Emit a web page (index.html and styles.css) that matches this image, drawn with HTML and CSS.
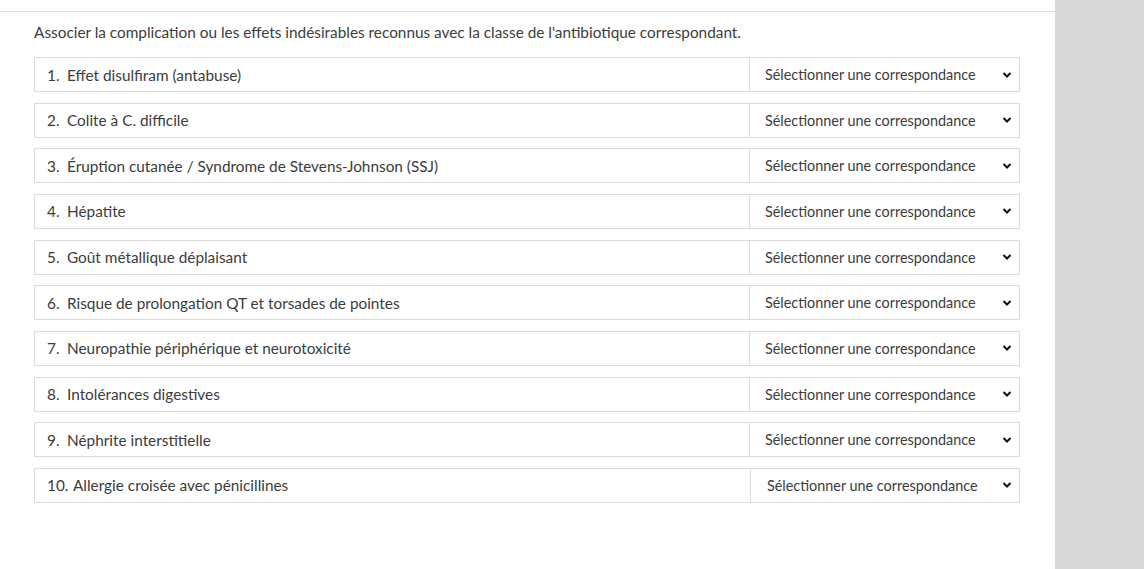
FILE: index.html
```html
<!DOCTYPE html>
<html lang="fr">
<head>
<meta charset="utf-8">
<title>Correspondance</title>
<link rel="stylesheet" href="styles.css">
</head>
<body>
<div class="page">
  <main class="content">
    <p class="prompt">Associer la complication ou les effets indésirables reconnus avec la classe de l'antibiotique correspondant.</p>
    <ol class="rows">
      <li class="row"><div class="label"><span class="num">1.</span><span>Effet disulfiram (antabuse)</span></div><div class="select"><span>Sélectionner une correspondance</span><svg class="chev" viewBox="0 0 10 8" width="10" height="8"><path d="M1.5 2 L5 5.5 L8.5 2" fill="none" stroke="#111" stroke-width="2"/></svg></div></li>
      <li class="row"><div class="label"><span class="num">2.</span><span>Colite à C. difficile</span></div><div class="select"><span>Sélectionner une correspondance</span><svg class="chev" viewBox="0 0 10 8" width="10" height="8"><path d="M1.5 2 L5 5.5 L8.5 2" fill="none" stroke="#111" stroke-width="2"/></svg></div></li>
      <li class="row"><div class="label"><span class="num">3.</span><span>Éruption cutanée / Syndrome de Stevens-Johnson (SSJ)</span></div><div class="select"><span>Sélectionner une correspondance</span><svg class="chev" viewBox="0 0 10 8" width="10" height="8"><path d="M1.5 2 L5 5.5 L8.5 2" fill="none" stroke="#111" stroke-width="2"/></svg></div></li>
      <li class="row"><div class="label"><span class="num">4.</span><span>Hépatite</span></div><div class="select"><span>Sélectionner une correspondance</span><svg class="chev" viewBox="0 0 10 8" width="10" height="8"><path d="M1.5 2 L5 5.5 L8.5 2" fill="none" stroke="#111" stroke-width="2"/></svg></div></li>
      <li class="row"><div class="label"><span class="num">5.</span><span>Goût métallique déplaisant</span></div><div class="select"><span>Sélectionner une correspondance</span><svg class="chev" viewBox="0 0 10 8" width="10" height="8"><path d="M1.5 2 L5 5.5 L8.5 2" fill="none" stroke="#111" stroke-width="2"/></svg></div></li>
      <li class="row"><div class="label"><span class="num">6.</span><span>Risque de prolongation QT et torsades de pointes</span></div><div class="select"><span>Sélectionner une correspondance</span><svg class="chev" viewBox="0 0 10 8" width="10" height="8"><path d="M1.5 2 L5 5.5 L8.5 2" fill="none" stroke="#111" stroke-width="2"/></svg></div></li>
      <li class="row"><div class="label"><span class="num">7.</span><span>Neuropathie périphérique et neurotoxicité</span></div><div class="select"><span>Sélectionner une correspondance</span><svg class="chev" viewBox="0 0 10 8" width="10" height="8"><path d="M1.5 2 L5 5.5 L8.5 2" fill="none" stroke="#111" stroke-width="2"/></svg></div></li>
      <li class="row"><div class="label"><span class="num">8.</span><span>Intolérances digestives</span></div><div class="select"><span>Sélectionner une correspondance</span><svg class="chev" viewBox="0 0 10 8" width="10" height="8"><path d="M1.5 2 L5 5.5 L8.5 2" fill="none" stroke="#111" stroke-width="2"/></svg></div></li>
      <li class="row"><div class="label"><span class="num">9.</span><span>Néphrite interstitielle</span></div><div class="select"><span>Sélectionner une correspondance</span><svg class="chev" viewBox="0 0 10 8" width="10" height="8"><path d="M1.5 2 L5 5.5 L8.5 2" fill="none" stroke="#111" stroke-width="2"/></svg></div></li>
      <li class="row wide"><div class="label"><span class="num">10.</span><span>Allergie croisée avec pénicillines</span></div><div class="select"><span>Sélectionner une correspondance</span><svg class="chev" viewBox="0 0 10 8" width="10" height="8"><path d="M1.5 2 L5 5.5 L8.5 2" fill="none" stroke="#111" stroke-width="2"/></svg></div></li>
    </ol>
  </main>
  <aside class="side"></aside>
</div>
</body>
</html>
```

FILE: styles.css
```css
* { box-sizing: border-box; }
html, body { margin: 0; padding: 0; height: 100%; }
body {
  font-family: "Lato", "Open Sans", sans-serif;
  color: #3c3c3c;
  background: #fff;
}
.page {
  display: flex;
  height: 569px;
}
.content {
  width: 1055px;
  border-top: 1px solid #ddd;
  margin-top: 11px;
  padding: 11px 35px 0 34px;
}
.side {
  flex: 1;
  background: #d9d9d9;
}
.prompt {
  margin: 0 0 15px 0;
  font-size: 15.35px;
  line-height: 19px;
}
.rows {
  list-style: none;
  margin: 0;
  padding: 0;
  display: flex;
  flex-direction: column;
  gap: 10.67px;
}
.row {
  display: flex;
  height: 35px;
  border: 1px solid #dcdcdc;
  font-size: 15.35px;
  width: 986px;
}
.label {
  width: 714px;
  display: flex;
  align-items: center;
  padding-left: 12px;
}
.num { width: 20px; }
.wide .num { width: 26px; }
.wide .label { width: 715px; }
.select {
  flex: 1;
  border-left: 1px solid #dcdcdc;
  display: flex;
  align-items: center;
  justify-content: space-between;
  padding: 0 7px 0 15px;
  font-size: 14.4px;
}
.wide .select { padding-left: 16px; }
.chev { display: block; }
```
